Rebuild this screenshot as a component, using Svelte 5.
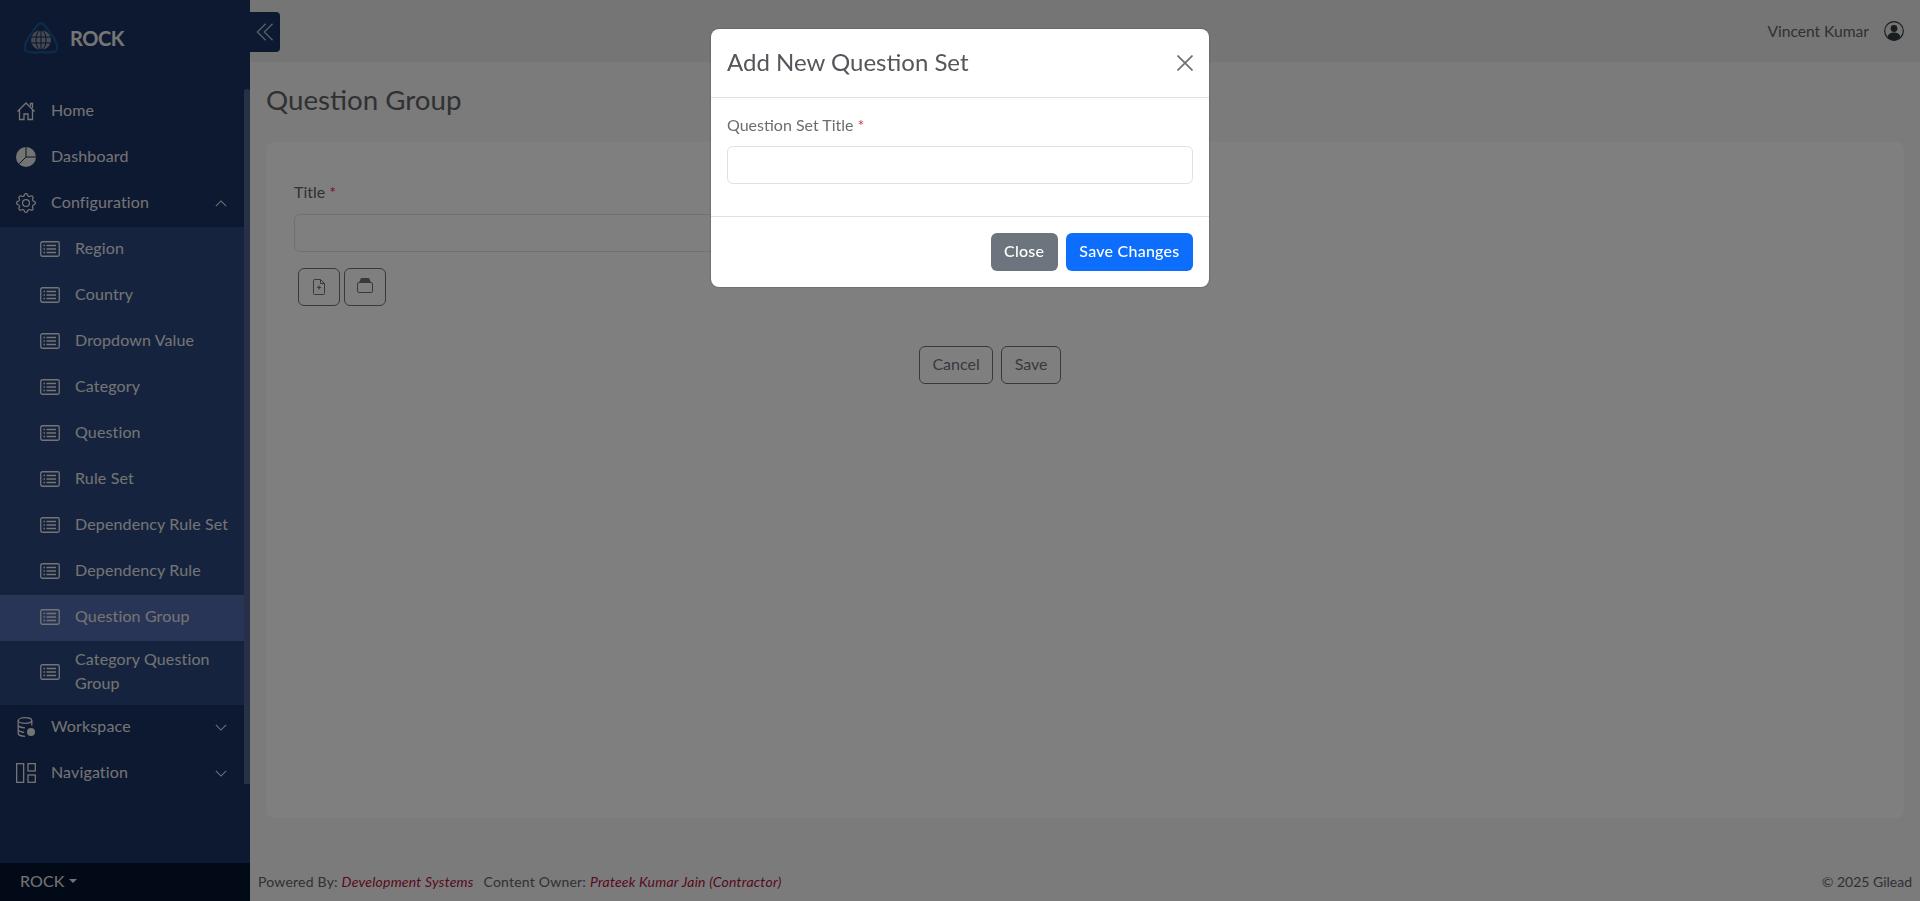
<script>
  const subItems = ['Region', 'Country', 'Dropdown Value', 'Category', 'Question', 'Rule Set', 'Dependency Rule Set', 'Dependency Rule', 'Question Group', 'Category Question Group'];
</script>

<div class="page">
  <aside class="sidebar">
    <div class="scroll-thumb"></div>
    <div class="brand">
      <svg class="logo" viewBox="0 0 34 34" width="34" height="34" fill="none">
        <path d="M17 2 C21 3 23 8 27 13 C31 18 34 25 33 29 C30 32 24 32 17 31 C10 32 4 32 1 29 C0 25 3 18 7 13 C11 8 13 3 17 2Z" stroke="#1a5590" stroke-width="2.4"/>
        <circle cx="17" cy="19" r="10" fill="#8a97a8"/>
        <g stroke="#16284a" stroke-width="1">
          <ellipse cx="17" cy="19" rx="5" ry="10"/>
          <path d="M17 9v20M7.5 16h19M7.5 22h19"/>
        </g>
      </svg>
      <span class="brand-name">ROCK</span>
    </div>
    <nav class="menu">
      <a class="item">
        <svg class="ico" viewBox="0 0 20 20" fill="none" stroke="currentColor" stroke-width="1.3"><path d="M1.5 10.5 10 2l8.5 8.5M3.500 9v9.500H8V13h4v5.500h4.500V9M14.500 5V2.500H16.500V7"/></svg>
        <span>Home</span>
      </a>
      <a class="item">
        <svg class="ico" viewBox="0 0 20 20"><circle cx="10" cy="10" r="10" fill="currentColor"/><path d="M10 0v10h10M10 10l-7 7" fill="none" stroke="#16284a" stroke-width="1"/></svg>
        <span>Dashboard</span>
      </a>
      <a class="item">
        <svg class="ico" viewBox="0 0 16 16" fill="currentColor"><path d="M8 4.754a3.246 3.246 0 1 0 0 6.492 3.246 3.246 0 0 0 0-6.492zM5.754 8a2.246 2.246 0 1 1 4.492 0 2.246 2.246 0 0 1-4.492 0z"/><path d="M9.796 1.343c-.527-1.79-3.065-1.79-3.592 0l-.094.319a.873.873 0 0 1-1.255.52l-.292-.16c-1.64-.892-3.433.902-2.54 2.541l.159.292a.873.873 0 0 1-.52 1.255l-.319.094c-1.79.527-1.79 3.065 0 3.592l.319.094a.873.873 0 0 1 .52 1.255l-.16.292c-.892 1.64.901 3.434 2.541 2.54l.292-.159a.873.873 0 0 1 1.255.52l.094.319c.527 1.79 3.065 1.79 3.592 0l.094-.319a.873.873 0 0 1 1.255-.52l.292.16c1.64.893 3.434-.902 2.54-2.541l-.159-.292a.873.873 0 0 1 .52-1.255l.319-.094c1.79-.527 1.79-3.065 0-3.592l-.319-.094a.873.873 0 0 1-.52-1.255l.16-.292c.893-1.64-.902-3.433-2.541-2.54l-.292.159a.873.873 0 0 1-1.255-.52l-.094-.319zm-2.633.283c.246-.835 1.428-.835 1.674 0l.094.319a1.873 1.873 0 0 0 2.693 1.115l.291-.16c.764-.415 1.6.42 1.184 1.185l-.159.292a1.873 1.873 0 0 0 1.116 2.692l.318.094c.835.246.835 1.428 0 1.674l-.319.094a1.873 1.873 0 0 0-1.115 2.693l.16.291c.415.764-.42 1.6-1.185 1.184l-.291-.159a1.873 1.873 0 0 0-2.693 1.116l-.094.318c-.246.835-1.428.835-1.674 0l-.094-.319a1.873 1.873 0 0 0-2.692-1.115l-.292.16c-.764.415-1.6-.42-1.184-1.185l.159-.291A1.873 1.873 0 0 0 1.945 8.93l-.319-.094c-.835-.246-.835-1.428 0-1.674l.319-.094A1.873 1.873 0 0 0 3.06 4.377l-.16-.292c-.415-.764.42-1.6 1.185-1.184l.292.159a1.873 1.873 0 0 0 2.692-1.115l.094-.319z"/></svg>
        <span>Configuration</span>
        <svg class="chev" viewBox="0 0 14 8" fill="none" stroke="currentColor" stroke-width="1.200"><path d="M1 7l6-6 6 6"/></svg>
      </a>
      <div class="submenu">
        {#each subItems as label}
          <a class="subitem" class:active={label === 'Question Group'}>
            <svg class="listico" viewBox="0 0 20 16" fill="none" stroke="currentColor"><rect x=".75" y=".75" width="18.500" height="14.500" rx="1.500" stroke-width="1.300"/><path d="M6.500 4.500h9.500M6.500 8h9.500M6.500 11.500h9.500M3.500 4.500h1.500M3.500 8h1.500M3.500 11.500h1.500" stroke-width="1.500"/></svg>
            <span>{label}</span>
          </a>
        {/each}
      </div>
      <a class="item">
        <svg class="ico" viewBox="0 0 20 20" fill="none" stroke="currentColor" stroke-width="1.300"><ellipse cx="9" cy="3.500" rx="6.800" ry="2.800"/><path d="M2.200 3.500v13c0 1.500 3 2.800 6.800 2.800M15.800 3.500v5M2.200 8c0 1.500 3 2.800 6.800 2.800M2.200 12.500c0 1.500 3 2.800 6 2.800"/><circle cx="15" cy="15" r="4" fill="currentColor" stroke="none"/></svg>
        <span>Workspace</span>
        <svg class="chev" viewBox="0 0 14 8" fill="none" stroke="currentColor" stroke-width="1.200"><path d="M1 1l6 6 6-6"/></svg>
      </a>
      <a class="item">
        <svg class="ico" viewBox="0 0 20 20" fill="none" stroke="currentColor" stroke-width="1.300"><rect x=".65" y=".65" width="7" height="18.700"/><rect x="12" y=".65" width="7.300" height="7.300"/><rect x="12" y="12" width="7.300" height="7.300"/></svg>
        <span>Navigation</span>
        <svg class="chev" viewBox="0 0 14 8" fill="none" stroke="currentColor" stroke-width="1.200"><path d="M1 1l6 6 6-6"/></svg>
      </a>
    </nav>
    <div class="side-foot"><span>ROCK</span><i class="caret"></i></div>
  </aside>

  <div class="main">
    <header class="topbar">
      <button class="toggle" aria-label="Collapse">
        <svg viewBox="0 0 16 16" width="22" height="22" fill="none" stroke="#a9b4c6" stroke-width="1.100"><path d="M8.500 2 2.500 8l6 6M13.500 2l-6 6 6 6"/></svg>
      </button>
      <div class="user">
        <span>Vincent Kumar</span>
        <svg viewBox="0 0 20 20" width="20" height="20"><circle cx="10" cy="10" r="9.300" fill="none" stroke="#343a40" stroke-width="1.200"/><circle cx="10" cy="7.500" r="3.400" fill="#343a40"/><path d="M3.500 16c1-3.500 3.500-4.500 6.500-4.500s5.500 1 6.500 4.500c-1.500 2.300-4 3.500-6.500 3.500s-5-1.200-6.500-3.500z" fill="#343a40"/></svg>
      </div>
    </header>
    <main class="content">
      <h1>Question Group</h1>
      <section class="card">
        <div class="form">
          <label class="field-label" for="title">Title <em>*</em></label>
          <input id="title" class="field half" />
          <div class="tools">
            <button class="tool" aria-label="New file">
              <svg viewBox="0 0 12 16" width="12" height="16" fill="none" stroke="#6c757d" stroke-width="1"><path d="M1.500.5h6l4 4v10a1 1 0 0 1-1 1h-9a1 1 0 0 1-1-1v-13a1 1 0 0 1 1-1zM7.500.5v4h4"/><path d="M6 6.500v4M4 8.500h4" stroke-width="1.200"/></svg>
            </button>
            <button class="tool" aria-label="Open folder">
              <svg class="tray" viewBox="0 0 16 15" width="16" height="15"><path d="M4 0h8l2 4.500H2z" fill="#6c757d"/><rect x=".5" y="4.500" width="15" height="10" rx="1.500" fill="none" stroke="#6c757d"/></svg>
            </button>
          </div>
          <div class="actions">
            <button class="outline">Cancel</button>
            <button class="outline">Save</button>
          </div>
        </div>
      </section>
    </main>
    <footer class="foot">
      <div class="credits">Powered By: <i>Development Systems</i> <span class="owner">Content Owner: <i>Prateek Kumar Jain (Contractor)</i></span></div>
      <div>© 2025 Gilead</div>
    </footer>
  </div>
</div>

<div class="backdrop"></div>
<div class="modal" role="dialog">
  <div class="modal-head">
    <h2>Add New Question Set</h2>
    <button class="close" aria-label="Close">
      <svg viewBox="0 0 16 16" width="16" height="16" fill="none" stroke="#6c6f73" stroke-width="1.700"><path d="M.5.5l15 15M15.500.5l-15 15"/></svg>
    </button>
  </div>
  <div class="modal-body">
    <label class="field-label" for="set-title">Question Set Title <em>*</em></label>
    <input id="set-title" class="field" />
  </div>
  <div class="modal-foot">
    <button class="btn grey">Close</button>
    <button class="btn blue">Save Changes</button>
  </div>
</div>

<style>
  :global(body) {
    margin: 0;
    font-family: Lato, "Liberation Sans", sans-serif;
    font-size: 16px;
    color: #5f6266;
    background: #f6f6f6;
  }
  .page {
    display: flex;
    height: 901px;
    overflow: hidden;
  }
  .sidebar {
    position: relative;
    width: 250px;
    flex: none;
    display: flex;
    flex-direction: column;
    background: #1b3163;
    color: #e8e8e8;
    letter-spacing: .14px;
  }
  .scroll-thumb {
    position: absolute;
    right: 0;
    top: 89px;
    width: 6px;
    height: 695px;
    border-radius: 3px 3px 0 0;
    background: #4c638f;
  }
  .brand {
    height: 88px;
    display: flex;
    align-items: center;
    gap: 12px;
    padding-left: 24px;
    box-sizing: border-box;
    padding-bottom: 12px;
  }
  .brand-name {
    font-size: 20px;
    font-weight: 700;
    letter-spacing: -.4px;
    color: #ececec;
  }
  .menu {
    flex: 1;
  }
  .item {
    height: 46px;
    display: flex;
    align-items: center;
    padding-left: 16px;
    padding-right: 23px;
  }
  .item span {
    margin-left: 15px;
    padding-bottom: 3px;
  }
  .ico {
    width: 20px;
    height: 20px;
    flex: none;
  }
  .chev {
    width: 12px;
    height: 7px;
    margin-left: auto;
  }
  .submenu {
    background: #2a467c;
    padding-right: 6px;
    margin: 1px 0 -1px;
  }
  .subitem {
    min-height: 46px;
    display: flex;
    align-items: center;
    padding-left: 40px;
    line-height: 24px;
  }
  .subitem:last-child {
    padding-top: 6px;
    padding-bottom: 6px;
  }
  .subitem span {
    margin-left: 15px;
    padding: 0 6px 4px 0;
  }
  .subitem.active {
    background: #526bad;
  }
  .listico {
    width: 20px;
    height: 16px;
    flex: none;
    margin-bottom: 2px;
  }
  .side-foot {
    height: 38px;
    display: flex;
    align-items: center;
    padding: 0 0 3px 20px;
    background: #05142e;
    box-sizing: border-box;
  }
  .caret {
    margin-left: 4px;
    border: 4px solid transparent;
    border-top-color: currentColor;
    border-bottom: 0;
  }
  .main {
    flex: 1;
    min-width: 0;
    display: flex;
    flex-direction: column;
  }
  .topbar {
    height: 62px;
    flex: none;
    display: flex;
    align-items: flex-start;
    justify-content: space-between;
    background: #ebebeb;
    padding-right: 16px;
    box-sizing: border-box;
    font-size: 15.6px;
  }
  .toggle {
    margin-top: 12px;
    width: 30px;
    height: 40px;
    padding: 0;
    border: 0;
    border-radius: 0 4px 4px 0;
    background: #1b3163;
    display: flex;
    align-items: center;
    justify-content: center;
  }
  .user {
    display: flex;
    align-items: center;
    gap: 15px;
    height: 62px;
  }
  .content {
    flex: 1;
    min-height: 0;
    display: flex;
    flex-direction: column;
    padding: 0 16px;
  }
  h1 {
    margin: 0;
    height: 80px;
    line-height: 75px;
    font-size: 27.7px;
    font-weight: 400;
  }
  .card {
    height: 676px;
    background: #fff;
    border-radius: 8px;
    padding: 38px 28px 0;
    box-sizing: border-box;
  }
  .form {
    width: 1392px;
  }
  .field-label {
    display: block;
    margin-bottom: 10px;
    line-height: 24px;
  }
  .field-label em {
    color: #dc3545;
    font-style: normal;
  }
  .field {
    display: block;
    width: 100%;
    height: 38px;
    box-sizing: border-box;
    border: 1px solid #dee2e6;
    border-radius: 6px;
    background: #fff;
  }
  .half {
    width: 760px;
  }
  .tools {
    display: flex;
    gap: 4px;
    padding: 16px 0 0 4px;
  }
  .tool {
    width: 42px;
    height: 38px;
    padding: 0;
    border: 1px solid #6c757d;
    border-radius: 6px;
    background: none;
    display: flex;
    align-items: center;
    justify-content: center;
  }
  .tray {
    margin-top: -4px;
  }
  .actions {
    display: flex;
    justify-content: center;
    gap: 8px;
    margin-top: 40px;
  }
  .outline {
    height: 38px;
    padding: 0 12.5px 3px;
    font: inherit;
    color: #6c757d;
    background: none;
    border: 1px solid #6c757d;
    border-radius: 6px;
  }
  .foot {
    height: 40px;
    flex: none;
    display: flex;
    justify-content: space-between;
    align-items: center;
    padding: 0 8px;
    font-size: 14px;
    color: #5f6266;
    box-sizing: border-box;
  }
  .credits {
    letter-spacing: .22px;
  }
  .foot i {
    color: #b3123f;
  }
  .owner {
    margin-left: 6px;
  }
  .backdrop {
    position: fixed;
    inset: 0;
    background: rgba(0, 0, 0, .5);
  }
  .modal {
    position: fixed;
    left: 711px;
    top: 29px;
    width: 498px;
    background: #fff;
    border-radius: 8px;
    box-shadow: 0 0 2px rgba(0, 0, 0, .4);
  }
  .modal-head {
    height: 69px;
    display: flex;
    align-items: center;
    justify-content: space-between;
    padding: 0 16px;
    border-bottom: 1px solid #dee2e6;
    box-sizing: border-box;
  }
  h2 {
    margin: 0 0 3px;
    font-size: 24px;
    font-weight: 400;
    color: #54565b;
  }
  .close {
    padding: 0;
    border: 0;
    background: none;
    display: flex;
  }
  .modal-body {
    padding: 15px 16px 32px;
  }
  .modal-body .field-label {
    margin-bottom: 9px;
    color: #6a6d71;
  }
  .modal-foot {
    display: flex;
    justify-content: flex-end;
    gap: 8px;
    padding: 16px;
    border-top: 1px solid #dee2e6;
  }
  .btn {
    height: 38px;
    padding: 0 13.5px 3px;
    font: inherit;
    font-weight: 500;
    letter-spacing: .25px;
    color: #fff;
    border: 0;
    border-radius: 6px;
  }
  .grey {
    background: #6c757d;
  }
  .blue {
    background: #0d6efd;
  }
</style>
